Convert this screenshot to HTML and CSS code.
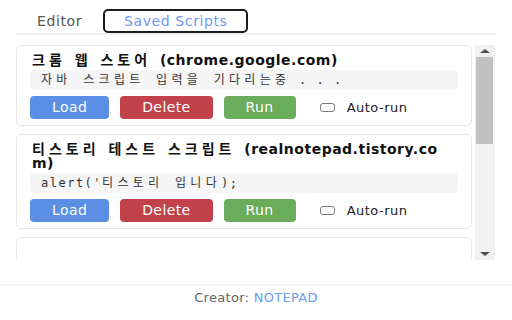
FILE: index.html
```html
<!DOCTYPE html>
<html lang="ko">
<head>
<meta charset="utf-8">
<title>Saved Scripts</title>
<link rel="stylesheet" href="styles.css">
</head>
<body>
<div class="app">
  <nav class="tabs">
    <button class="tab">Editor</button>
    <button class="tab active">Saved Scripts</button>
  </nav>
  <div class="viewport">
    <section class="list">
      <article class="card">
        <h3 class="title"><span class="ko">크롬 웹 스토어 </span>(chrome.google.com)</h3>
        <pre class="code"><span class="ko">자바 스크립트 입력을 기다리는중</span> . . .</pre>
        <div class="actions">
          <button class="btn load">Load</button>
          <button class="btn delete">Delete</button>
          <button class="btn run">Run</button>
          <label class="auto"><input type="checkbox" class="check"><span>Auto-run</span></label>
        </div>
      </article>
      <article class="card">
        <h3 class="title"><span class="ko">티스토리 테스트 스크립트 </span>(realnotepad.tistory.com)</h3>
        <pre class="code">alert('<span class="ko">티스토리 입니다</span>);</pre>
        <div class="actions">
          <button class="btn load">Load</button>
          <button class="btn delete">Delete</button>
          <button class="btn run">Run</button>
          <label class="auto"><input type="checkbox" class="check"><span>Auto-run</span></label>
        </div>
      </article>
      <article class="card card-empty">
        <h3 class="title"></h3>
        <pre class="code"></pre>
      </article>
    </section>
    <div class="scrollbar" aria-hidden="true">
      <div class="sb-btn"><span class="arrow up"></span></div>
      <div class="sb-thumb"></div>
      <div class="sb-track"></div>
      <div class="sb-btn"><span class="arrow down"></span></div>
    </div>
  </div>
  <footer class="footer">Creator: <span class="author">NOTEPAD</span></footer>
</div>
</body>
</html>
```
FILE: styles.css
```css
* { box-sizing: border-box; }

html, body {
  margin: 0;
  padding: 0;
  background: #ffffff;
}

body {
  font-family: "DejaVu Sans", "Noto Sans CJK KR", sans-serif;
  color: #222;
}

.app {
  width: 512px;
  height: 320px;
  display: flex;
  flex-direction: column;
  overflow: hidden;
}

/* tabs */
.tabs {
  display: flex;
  margin: 0 16px;
  padding-top: 9px;
  border-bottom: 2px solid #eeeeee;
}

.tab {
  height: 24px;
  padding: 0 19px;
  border: 2px solid transparent;
  border-radius: 5px;
  background: transparent;
  font-family: "DejaVu Sans", sans-serif;
  font-size: 14px;
  letter-spacing: 0.6px;
  color: #555;
  line-height: 20px;
}

.tab.active {
  border-color: #1c1c1c;
  color: #6b9bf2;
}

/* scroll area */
.viewport {
  display: flex;
  gap: 3px;
  margin: 10px 0 0 16px;
  width: 479px;
  height: 215px;
}

.list {
  flex: 1;
  overflow: hidden;
  display: flex;
  flex-direction: column;
  gap: 8px;
}

.scrollbar {
  width: 20px;
  display: flex;
  flex-direction: column;
  background: #f1f1f1;
}

.sb-btn {
  height: 12px;
  display: flex;
  align-items: center;
  justify-content: center;
}

.arrow {
  width: 0;
  height: 0;
  border-left: 5px solid transparent;
  border-right: 5px solid transparent;
}

.arrow.up { border-bottom: 4px solid #505050; }
.arrow.down { border-top: 4px solid #505050; }

.sb-thumb {
  height: 87px;
  margin: 0 2px 0 1px;
  background: #c1c1c1;
}

.sb-track { flex: 1; }

/* cards */
.card {
  flex: none;
  border: 1px solid #e6e6e6;
  border-radius: 5px;
  padding: 7px 13px 6px 13px;
  background: #fff;
}

.card-empty {
  height: 80px;
}

.title {
  margin: 0 6px 3px 2px;
  min-height: 14px;
  font-size: 14px;
  line-height: 14px;
  font-weight: bold;
  letter-spacing: 0.5px;
  color: #111;
  word-break: break-all;
}

.title .ko {
  letter-spacing: 4px;
}

.code {
  margin: 0;
  height: 20px;
  padding: 0 11px;
  border-radius: 4px;
  background: #f5f5f5;
  font-family: "DejaVu Sans Mono", "Noto Sans CJK KR", monospace;
  font-size: 12px;
  line-height: 20px;
  letter-spacing: 1.5px;
  color: #333;
  white-space: pre;
  overflow: hidden;
}

.code .ko {
  letter-spacing: 4.3px;
}

.actions {
  display: flex;
  align-items: center;
  gap: 11px;
  margin-top: 6px;
}

.btn {
  height: 23px;
  padding: 0 22px;
  border: none;
  border-radius: 4px;
  font-family: "DejaVu Sans", sans-serif;
  font-size: 14px;
  letter-spacing: 0.4px;
  color: #fff;
  line-height: 23px;
}

.btn.load { background: #5b8fe6; }
.btn.delete { background: #c1424b; }
.btn.run { background: #6aab5c; }

.auto {
  display: flex;
  align-items: center;
  gap: 12px;
  margin-left: 13px;
  font-size: 13px;
  letter-spacing: 0.5px;
  color: #222;
}

.check {
  appearance: none;
  -webkit-appearance: none;
  margin: 0;
  width: 15px;
  height: 9px;
  border: 1.5px solid #7a7a7a;
  border-radius: 3px;
  background: #fff;
}

/* footer */
.footer {
  margin-top: auto;
  height: 36px;
  border-top: 1px solid #eeeeee;
  padding-top: 5px;
  text-align: center;
  font-size: 13px;
  line-height: 16px;
  letter-spacing: 0.3px;
  color: #666;
}

.author {
  color: #6b9bf2;
}
```
